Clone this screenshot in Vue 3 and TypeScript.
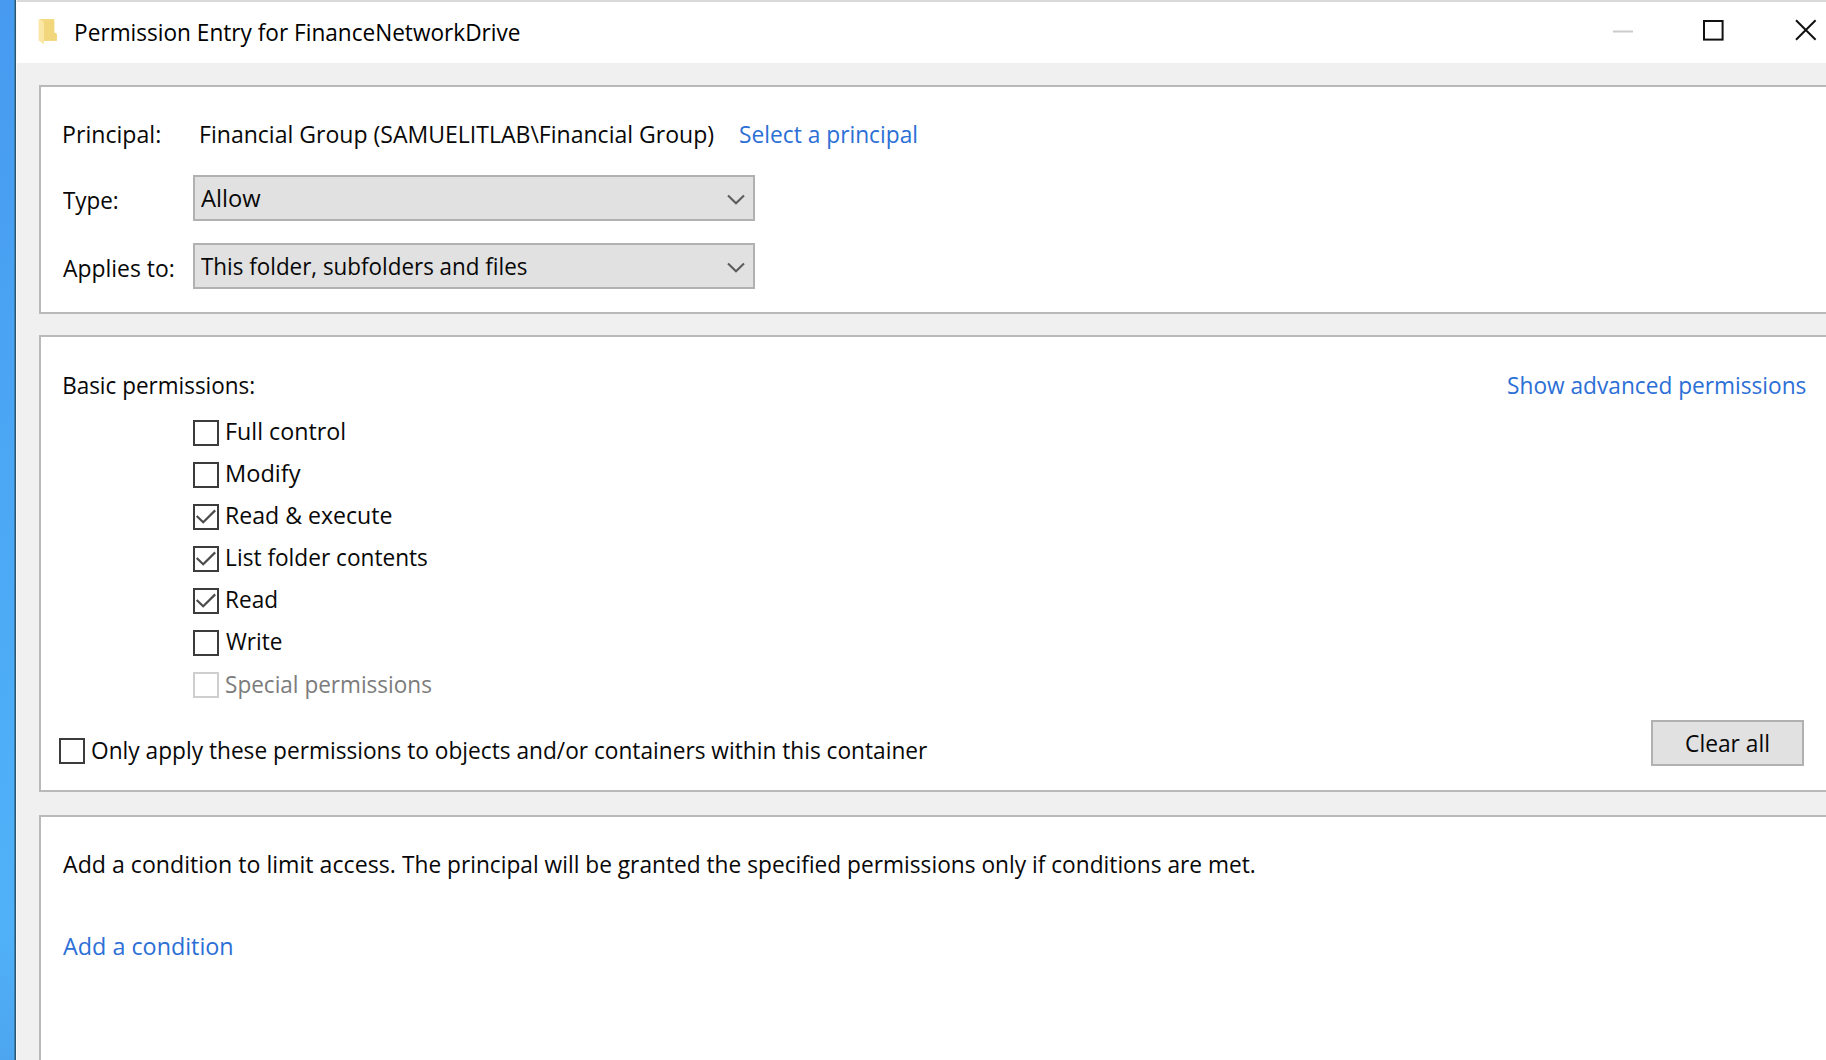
<script setup lang="ts">
import { reactive } from 'vue'

interface Permission {
  label: string
  width: number
  checked: boolean
  disabled?: boolean
  outset?: boolean
}

const permissions = reactive<Permission[]>([
  { label: 'Full control', width: 118, checked: false },
  { label: 'Modify', width: 74.5, checked: false },
  { label: 'Read & execute', width: 165, checked: true },
  { label: 'List folder contents', width: 200.5, checked: true },
  { label: 'Read', width: 49.5, checked: true },
  { label: 'Write', width: 56, checked: false, outset: true },
  { label: 'Special permissions', width: 205.5, checked: false, disabled: true, outset: true },
])

const entries = [
  { name: 'Type:', nameWidth: 54.5, value: 'Allow', valueWidth: 60 },
  { name: 'Applies to:', nameWidth: 110.5, value: 'This folder, subfolders and files', valueWidth: 326 },
]

// Condenses a single line of text so that its visible glyphs fill exactly the given width.
const vFit = {
  mounted(el: HTMLElement, binding: { value: number }) {
    const context = document.createElement('canvas').getContext('2d')
    if (!context) return
    const style = getComputedStyle(el)
    context.font = `${style.fontSize} ${style.fontFamily}`
    const box = context.measureText((el.textContent ?? '').trim())
    const scale = binding.value / (box.actualBoundingBoxRight + box.actualBoundingBoxLeft)
    el.style.width = `${binding.value}px`
    el.style.transform = `translateX(${box.actualBoundingBoxLeft * scale}px) scaleX(${scale})`
  },
}

function toggle(item: Permission) {
  if (!item.disabled) item.checked = !item.checked
}
</script>

<template>
  <div class="screen">
    <div class="desktop"></div>
    <main class="window">
      <header class="titlebar">
        <svg class="folder" width="20" height="28" viewBox="0 0 20 28">
          <path d="M1 1H16.2V14.5L18.8 16V22.8H5V4Z" fill="#f3d97f" />
          <path d="M6 3H16.2V14.5L18.8 16V22.8H6Z" fill="#f2d67b" />
          <path d="M0.6 1L6 4.4V26.6L0.6 22.6Z" fill="#fae7a6" />
        </svg>
        <span v-fit="444" class="text title">Permission Entry for FinanceNetworkDrive</span>
        <svg class="controls" width="206" height="24" viewBox="0 0 206 24">
          <path d="M0 12.5H20" stroke="#cbcbcb" stroke-width="2" />
          <rect x="91" y="2" width="18.6" height="18.6" fill="none" stroke="#111" stroke-width="2" />
          <path d="M183 1.3L202.6 20.8M202.6 1.3L183 20.8" stroke="#111" stroke-width="2" />
        </svg>
      </header>

      <section class="panel principal-panel">
        <div class="principal-row">
          <span v-fit="96" class="text">Principal:</span>
          <span v-fit="513" class="text principal-name">Financial Group (SAMUELITLAB\Financial Group)</span>
          <a v-fit="177" class="text link">Select a principal</a>
        </div>
        <div v-for="entry in entries" :key="entry.name" class="entry-row">
          <div class="entry-label"><span v-fit="entry.nameWidth" class="text">{{ entry.name }}</span></div>
          <div class="select">
            <span v-fit="entry.valueWidth" class="text">{{ entry.value }}</span>
            <svg width="18" height="12" viewBox="0 0 18 12">
              <path d="M1 1.5L9 9.3L17 1.5" fill="none" stroke="#5c5c5c" stroke-width="2.1" />
            </svg>
          </div>
        </div>
      </section>

      <section class="panel permissions-panel">
        <div class="heading-row">
          <span v-fit="190" class="text">Basic permissions:</span>
          <a v-fit="298" class="text link">Show advanced permissions</a>
        </div>
        <ul class="permissions">
          <li
            v-for="item in permissions"
            :key="item.label"
            :class="{ disabled: item.disabled, outset: item.outset }"
            @click="toggle(item)"
          >
            <span class="box">
              <svg v-if="item.checked" width="22" height="22" viewBox="0 0 22 22">
                <path d="M1.7 10L8.2 16.3L20.2 4.4" fill="none" stroke="#4c4c4c" stroke-width="2.2" />
              </svg>
            </span>
            <span v-fit="item.width" class="text">{{ item.label }}</span>
          </li>
        </ul>
        <div class="footer-row">
          <label class="only">
            <span class="box"></span>
            <span v-fit="835.5" class="text">Only apply these permissions to objects and/or containers within this container</span>
          </label>
          <button type="button"><span v-fit="83" class="text">Clear all</span></button>
        </div>
      </section>

      <section class="panel condition-panel">
        <div class="hint">
          <span v-fit="331.5" class="text">Add a condition to limit access.</span>
          <span v-fit="852.5" class="text">The principal will be granted the specified permissions only if conditions are met.</span>
        </div>
        <a v-fit="169" class="text link">Add a condition</a>
      </section>
    </main>
  </div>
</template>

<style>
body {
  overflow: hidden;
}
</style>

<style scoped>
.screen {
  display: flex;
  width: 1826px;
  height: 1060px;
  overflow: hidden;
  background: #f0f0f0;
}
.desktop {
  box-sizing: border-box;
  flex: none;
  width: 16px;
  border-right: 1px solid #2c566f;
  background: linear-gradient(#479af0, #4aa3f3 30%, #4fb0f8 78%, #50b1f8 88%, #4da5ef);
  box-shadow: inset -1px 0 #3a7eb0;
}
.window {
  box-sizing: border-box;
  flex: none;
  display: flex;
  flex-direction: column;
  width: 1810px;
  border-left: 1px solid #fafafa;
}
.text {
  display: block;
  flex: none;
  font: 24px/24px 'Open Sans', sans-serif;
  color: #080808;
  white-space: nowrap;
  transform-origin: 0 0;
}
.link {
  color: #2c6fd6;
  cursor: pointer;
}
.titlebar {
  box-sizing: border-box;
  flex: none;
  display: flex;
  align-items: flex-start;
  height: 62.5px;
  border-top: 2px solid #d9d9d9;
  background: #fff;
}
.folder {
  flex: none;
  margin: 15.5px 0 0 21px;
}
.title {
  margin: 18px 0 0 18px;
  color: #000;
}
.controls {
  flex: none;
  margin: 17px 0 0 1092.5px;
}
.panel {
  box-sizing: border-box;
  flex: none;
  width: 1800px;
  margin-left: 22px;
  border: 2px solid #b9b9b9;
  background: #fff;
}
.principal-panel {
  height: 228.5px;
  margin-top: 22.5px;
  padding: 35px 0 0 22.5px;
}
.principal-row {
  display: flex;
  height: 53px;
}
.principal-name {
  margin: 0 26px 0 41px;
}
.entry-row {
  display: flex;
  height: 68px;
}
.entry-label {
  flex: none;
  width: 129.5px;
  padding-top: 13px;
}
.entry-label .text {
  margin-left: -0.5px;
}
.select {
  box-sizing: border-box;
  display: flex;
  justify-content: space-between;
  width: 562px;
  height: 46px;
  padding: 9px 8px 0 6px;
  border: 2px solid #b1b1b1;
  background: #e1e1e1;
}
.select svg {
  flex: none;
  margin-top: 7.5px;
}
.permissions-panel {
  height: 457px;
  margin-top: 21.5px;
}
.heading-row {
  display: flex;
  justify-content: space-between;
  width: 1764.5px;
  height: 82.6px;
  box-sizing: border-box;
  padding: 36px 0 0 22.5px;
}
.permissions {
  margin: 0 0 0 152px;
  padding: 0;
  list-style: none;
}
.permissions li {
  display: flex;
  height: 42.1px;
}
.permissions li .text {
  margin: -0.6px 0 0 8px;
}
.permissions li.outset .text {
  margin-left: 6.8px;
}
.box {
  box-sizing: border-box;
  flex: none;
  width: 26px;
  height: 26px;
  border: 2px solid #3c3c3c;
}
.box svg {
  display: block;
}
.disabled .box {
  border-color: #cfcfcf;
}
.disabled .text {
  color: #7c7c7c;
}
.footer-row {
  display: flex;
  justify-content: space-between;
  width: 1762.5px;
  margin-top: 6.2px;
}
.only {
  display: flex;
  padding: 18px 0 0 17.5px;
}
.only .text {
  margin: -0.5px 0 0 7px;
}
button {
  box-sizing: border-box;
  display: flex;
  justify-content: center;
  width: 152.5px;
  height: 46px;
  padding: 9px 0 0;
  border: 2px solid #b1b1b1;
  border-radius: 0;
  background: #e1e1e1;
}
.condition-panel {
  display: flex;
  flex-direction: column;
  gap: 58px;
  height: 300px;
  margin-top: 23px;
  padding: 35px 0 0 22px;
}
.hint {
  display: flex;
  gap: 7.5px;
}
</style>
